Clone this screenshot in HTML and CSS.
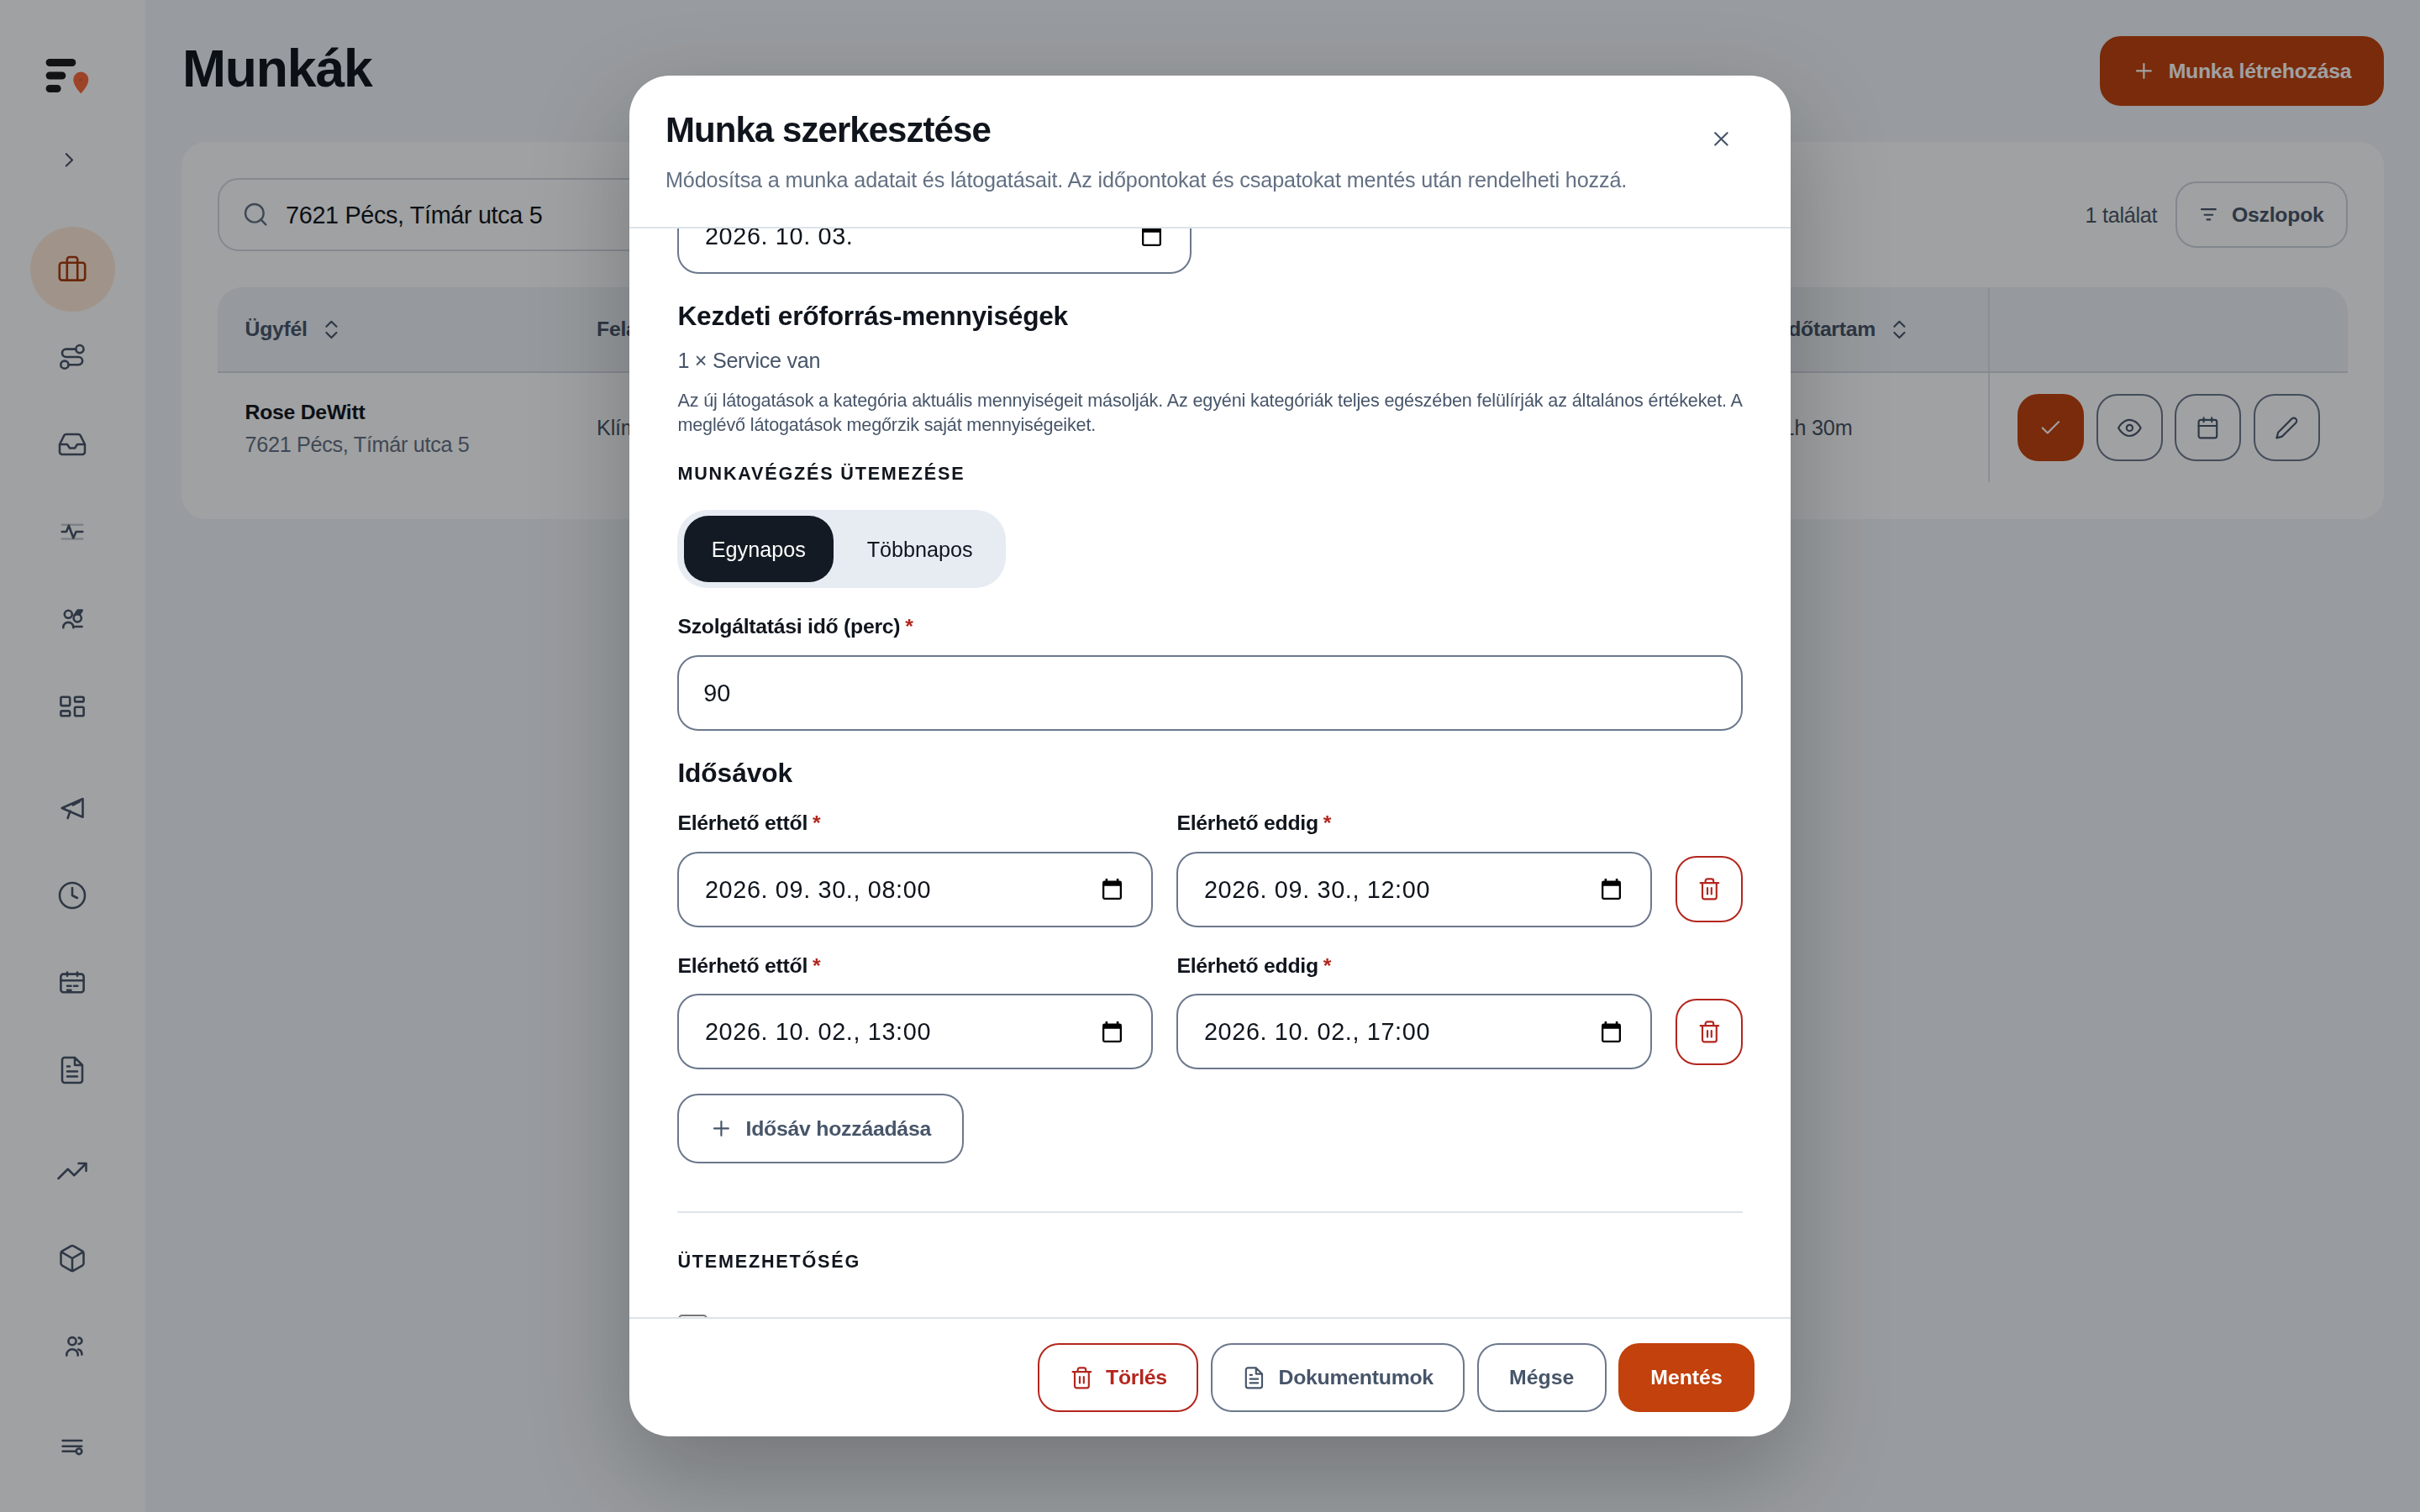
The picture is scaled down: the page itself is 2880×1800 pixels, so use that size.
FILE: index.html
```html
<!DOCTYPE html>
<html lang="hu">
<head>
<meta charset="utf-8">
<title>Munkák</title>
<link rel="stylesheet" href="styles.css">
</head>
<body>
<svg class="defs" aria-hidden="true">
  <symbol id="i-plus" viewBox="0 0 24 24"><path d="M12 5v14M5 12h14"/></symbol>
  <symbol id="i-trash" viewBox="0 0 24 24"><path d="M3 6h18M19 6v14a2 2 0 0 1-2 2H7a2 2 0 0 1-2-2V6M8 6V4a2 2 0 0 1 2-2h4a2 2 0 0 1 2 2v2M10 11v6M14 11v6"/></symbol>
  <symbol id="i-file" viewBox="0 0 24 24"><path d="M14 2H6a2 2 0 0 0-2 2v16a2 2 0 0 0 2 2h12a2 2 0 0 0 2-2V8zM14 2v6h6M16 13H8M16 17H8M10 9H8"/></symbol>
  <symbol id="i-sort" viewBox="0 0 24 24"><path d="M7 15l5 5 5-5M7 9l5-5 5 5"/></symbol>
  <symbol id="i-picker" viewBox="0 0 23 25"><path fill="#000" stroke="none" fill-rule="evenodd" d="M3.6 0h2.6v2.6h10.6V0h2.6v2.6h1.2A2.4 2.4 0 0 1 23 5v17.6a2.4 2.4 0 0 1-2.4 2.4H2.4A2.4 2.4 0 0 1 0 22.600V5a2.400 2.400 0 0 1 2.400-2.400h1.200zM2.300 8.800v13.900h18.400V8.800z"/></symbol>
</svg>

<div class="app">
  <aside class="sidebar">
    <svg class="logo" viewBox="0 0 72 42"><rect x="4.600" y="0" width="35.700" height="9" rx="4.500" fill="#1a1a1a"/><rect x="4.600" y="15.500" width="23.700" height="9" rx="4.500" fill="#1a1a1a"/><rect x="4.600" y="31" width="18" height="9" rx="4.500" fill="#1a1a1a"/><path fill="#f9683a" d="M46.300 41.500c-3.500-4.200-9-10.500-9-17a9 9 0 0 1 18 0c0 6.500-5.500 12.800-9 17z"/><circle cx="46.300" cy="25" r="2.200" fill="#e85f35"/></svg>
    <svg class="icon expand" viewBox="0 0 24 24"><path d="M9 18l6-6-6-6"/></svg>
    <nav class="nav">
      <div class="nav-group">
        <a class="nav-item active"><svg class="glyph" viewBox="-20 -20 40 40"><rect x="-15.200" y="-7.200" width="30.400" height="20.800" rx="3"/><path d="M-6.200 13.600V-11a3 3 0 0 1 3-3H3.200a3 3 0 0 1 3 3V13.600"/></svg></a>
        <a class="nav-item"><svg class="glyph" viewBox="-20 -20 40 40"><circle cx="8.900" cy="-9.400" r="4.600"/><circle cx="-9.100" cy="9.200" r="4.600"/><path d="M4.300-9.400H-7.300a4.700 4.700 0 0 0 0 9.400H7.500a4.600 4.600 0 0 1 0 9.200H-4.500"/></svg></a>
        <a class="nav-item"><svg class="icon nav-icon" viewBox="0 0 24 24"><path d="M22 12h-6l-2 3h-4l-2-3H2M5.450 5.110L2 12v6a2 2 0 0 0 2 2h16a2 2 0 0 0 2-2v-6l-3.450-6.890A2 2 0 0 0 16.760 4H7.240a2 2 0 0 0-1.790 1.110z"/></svg></a>
        <a class="nav-item"><svg class="glyph" viewBox="-20 -20 40 40"><path opacity=".3" d="M-12.300-8.300H12.300M-12.300 8.500H12.300"/><path d="M-12.300 0H-7L-4.100-7.300 1.300 7.500 4.500 0H12.300"/></svg></a>
        <a class="nav-item"><svg class="glyph" viewBox="-20 -20 40 40"><circle cx="-4.700" cy="-5.700" r="4.500"/><path d="M-10.700 10.300V9.500a6 5.600 0 0 1 12 0v.8M1.500 9H11.600"/><circle cx="6.200" cy="-1.200" r="4.600"/><path d="M2-3.800L6.600-10.400H11.700L8.600-5.500M8.800-10.200L5.800-5.800"/></svg></a>
        <a class="nav-item"><svg class="glyph" viewBox="-20 -20 40 40"><rect x="-13.600" y="-11.200" width="10.800" height="10.300" rx="1.500"/><rect x="3" y="-11.200" width="10.600" height="5.600" rx="1.500"/><rect x="3" y=".8" width="10.600" height="10.400" rx="1.500"/><rect x="-13.600" y="5.400" width="10.800" height="5.800" rx="1.500"/></svg></a>
      </div>
      <div class="nav-group">
        <a class="nav-item"><svg class="glyph" viewBox="-20 -20 40 40"><path d="M-12.300 0L12.500-11V10.700zM-2.400 3.500L-5.400 12M.8-3.700L9-8"/></svg></a>
        <a class="nav-item"><svg class="icon nav-icon" viewBox="0 0 24 24"><circle cx="12" cy="12" r="10"/><path d="M12 6v6l4 2"/></svg></a>
        <a class="nav-item"><svg class="glyph" viewBox="-20 -20 40 40"><rect x="-13.600" y="-10.400" width="27.200" height="21.600" rx="3"/><path d="M-13.600-2.700H13.600M-6-12.400V-8.200M6-12.400V-8.200M-6 3.700H-1.500M2 3.700H6.300M-6 8.700H-1.500"/></svg></a>
        <a class="nav-item"><svg class="icon nav-icon"><use href="#i-file"/></svg></a>
      </div>
      <div class="nav-group">
        <a class="nav-item"><svg class="icon nav-icon" viewBox="0 0 24 24"><path d="M23 6l-9.500 9.500-5-5L1 18M17 6h6v6"/></svg></a>
        <a class="nav-item"><svg class="icon nav-icon" viewBox="0 0 24 24"><path d="M21 16V8a2 2 0 0 0-1-1.730l-7-4a2 2 0 0 0-2 0l-7 4A2 2 0 0 0 3 8v8a2 2 0 0 0 1 1.730l7 4a2 2 0 0 0 2 0l7-4A2 2 0 0 0 21 16zM3.270 6.960L12 12.010l8.730-5.050M12 22.080V12"/></svg></a>
        <a class="nav-item"><svg class="glyph" viewBox="-20 -20 40 40"><circle cx="0" cy="-6.300" r="4.600"/><path d="M-6.700 10.600V9.700a6.700 6.400 0 0 1 13.400 0v.9M7.600-10.400a3.800 3.700 0 0 1 0 7.400M7 3.600c3 .6 4.400 2.600 4.400 6"/></svg></a>
      </div>
      <div class="nav-group">
        <a class="nav-item"><svg class="glyph" viewBox="-20 -20 40 40"><path d="M-11.400-8H11.200M-11.400-1.200H11.200M-11.400 4.800H4.600"/><circle cx="8" cy="4.800" r="3.300"/></svg></a>
      </div>
    </nav>
  </aside>

  <main class="main">
    <header class="page-head">
      <h1 class="page-title">Munkák</h1>
      <button class="btn primary"><svg class="icon"><use href="#i-plus"/></svg>Munka létrehozása</button>
    </header>
    <section class="card">
      <div class="toolbar">
        <div class="search"><svg class="icon search-icon" viewBox="0 0 24 24"><circle cx="11" cy="11" r="8"/><path d="M21 21l-4.350-4.350"/></svg><span>7621 Pécs, Tímár utca 5</span></div>
        <div class="tools">
          <span class="count">1 találat</span>
          <button class="btn columns"><svg class="icon" viewBox="0 0 24 24"><path d="M5 6.800h14M8 12.300h8M10.500 17h3"/></svg>Oszlopok</button>
        </div>
      </div>
      <div class="table">
        <div class="row head">
          <div class="cell">Ügyfél<svg class="icon"><use href="#i-sort"/></svg></div>
          <div class="cell">Feladat</div>
          <div class="cell time">Időtartam<svg class="icon"><use href="#i-sort"/></svg></div>
          <div class="cell actions"></div>
        </div>
        <div class="row body">
          <div class="cell"><div><div class="client">Rose DeWitt</div><div class="address">7621 Pécs, Tímár utca 5</div></div></div>
          <div class="cell">Klíma</div>
          <div class="cell time">1h 30m</div>
          <div class="cell actions">
            <button class="sq primary"><svg class="icon" viewBox="0 0 24 24"><path d="M20 6L9 17l-5-5"/></svg></button>
            <button class="sq"><svg class="icon" viewBox="0 0 24 24"><path d="M1 12s4-8 11-8 11 8 11 8-4 8-11 8-11-8-11-8z"/><circle cx="12" cy="12" r="3"/></svg></button>
            <button class="sq"><svg class="icon" viewBox="0 0 24 24"><rect x="3" y="4" width="18" height="18" rx="2"/><path d="M16 2v4M8 2v4M3 10h18"/></svg></button>
            <button class="sq"><svg class="icon" viewBox="0 0 24 24"><path d="M17 3a2.828 2.828 0 1 1 4 4L7.500 20.500 2 22l1.500-5.500z"/></svg></button>
          </div>
        </div>
      </div>
    </section>
  </main>
</div>

<div class="overlay">
  <div class="modal" role="dialog">
    <header class="modal-head">
      <div>
        <h2 class="modal-title">Munka szerkesztése</h2>
        <p class="modal-desc">Módosítsa a munka adatait és látogatásait. Az időpontokat és csapatokat mentés után rendelheti hozzá.</p>
      </div>
      <button class="close"><svg class="icon" viewBox="0 0 24 24"><path d="M18 6L6 18M6 6l12 12"/></svg></button>
    </header>
    <div class="modal-body">
      <div class="field date half">2026. 10. 03.<svg class="picker"><use href="#i-picker"/></svg></div>
      <h3 class="sub resources">Kezdeti erőforrás-mennyiségek</h3>
      <p class="amount">1 × Service van</p>
      <p class="note">Az új látogatások a kategória aktuális mennyiségeit másolják. Az egyéni kategóriák teljes egészében felülírják az általános értékeket. A<br>meglévő látogatások megőrzik saját mennyiségeiket.</p>
      <h4 class="caps schedule">MUNKAVÉGZÉS ÜTEMEZÉSE</h4>
      <div class="segment"><button class="seg on">Egynapos</button><button class="seg">Többnapos</button></div>
      <div class="label duration">Szolgáltatási idő (perc)<span class="req">*</span></div>
      <div class="field">90</div>
      <h3 class="sub slots">Idősávok</h3>
      <div class="slot-row">
        <div><div class="label">Elérhető ettől<span class="req">*</span></div><div class="field date">2026. 09. 30., 08:00<svg class="picker"><use href="#i-picker"/></svg></div></div>
        <div><div class="label">Elérhető eddig<span class="req">*</span></div><div class="field date">2026. 09. 30., 12:00<svg class="picker"><use href="#i-picker"/></svg></div></div>
        <button class="sq danger"><svg class="icon"><use href="#i-trash"/></svg></button>
      </div>
      <div class="slot-row">
        <div><div class="label">Elérhető ettől<span class="req">*</span></div><div class="field date">2026. 10. 02., 13:00<svg class="picker"><use href="#i-picker"/></svg></div></div>
        <div><div class="label">Elérhető eddig<span class="req">*</span></div><div class="field date">2026. 10. 02., 17:00<svg class="picker"><use href="#i-picker"/></svg></div></div>
        <button class="sq danger"><svg class="icon"><use href="#i-trash"/></svg></button>
      </div>
      <button class="btn add"><svg class="icon"><use href="#i-plus"/></svg>Idősáv hozzáadása</button>
      <hr class="rule">
      <h4 class="caps">ÜTEMEZHETŐSÉG</h4>
      <div class="checkbox"></div>
    </div>
    <footer class="modal-foot">
      <button class="btn danger">
        <svg class="icon"><use href="#i-trash"/></svg>Törlés</button>
      <button class="btn docs"><svg class="icon"><use href="#i-file"/></svg>Dokumentumok</button>
      <button class="btn wide">Mégse</button>
      <button class="btn primary wide">Mentés</button>
    </footer>
  </div>
</div>
</body>
</html>
```
FILE: styles.css
```css
:root {
  font-size: 28.8px;
  --ink: #10151d;
  --muted: #475569;
  --soft: #637083;
  --edge: #6b788c;
  --line: #dde3ea;
  --accent: #c2410c;
  --danger: #b3261e;
}

* { box-sizing: border-box; }

body {
  margin: 0;
  height: 1800px;
  overflow: hidden;
  background: #f3f6fa;
  color: var(--ink);
  font-family: "Liberation Sans", Arial, sans-serif;
  font-size: 25.2px;
  line-height: 36px;
}

h1, h2, h3, h4, p { margin: 0; }

button {
  font: inherit;
  color: inherit;
  background: none;
  border: 0;
  padding: 0;
}

.defs { position: absolute; width: 0; height: 0; }

.icon {
  width: 1rem;
  height: 1rem;
  flex: none;
  fill: none;
  stroke: currentColor;
  stroke-width: 1.8;
  stroke-linecap: round;
  stroke-linejoin: round;
}

.app { display: flex; height: 1800px; }

/* Sidebar */
.sidebar {
  width: 6rem;
  flex: none;
  display: flex;
  flex-direction: column;
  align-items: center;
  padding-top: 70px;
  background: #fff;
  color: #475569;
}

.logo { width: 72px; height: 42px; }

.expand { margin: 64.4px 7.2px 64.8px 0; stroke-width: 1.8; }

.nav { display: flex; flex-direction: column; gap: 19.4px; }
.nav-group { display: flex; flex-direction: column; gap: 3.4px; }

.nav-item {
  width: 3.5rem;
  height: 3.5rem;
  display: flex;
  align-items: center;
  justify-content: center;
  border-radius: 50%;
}

.nav-item.active { background: #ffead9; color: #a83a0c; }

.nav-icon { width: 36px; height: 36px; stroke-width: 1.7; }

.glyph {
  width: 40px;
  height: 40px;
  fill: none;
  stroke: currentColor;
  stroke-width: 2.6;
  stroke-linecap: round;
  stroke-linejoin: round;
}

/* Page */
.main { flex: 1; padding: 1.5rem; }

.page-head {
  display: flex;
  justify-content: space-between;
  height: 82.8px;
  margin-bottom: 1.5rem;
}

.page-title {
  font-size: 62.5px;
  line-height: 64px;
  letter-spacing: -.019em;
  padding: 6px 0 0 1px;
}

.btn {
  display: inline-flex;
  align-items: center;
  gap: .5rem;
  height: 82.8px;
  padding: 0 36.5px 0 36px;
  border: 2px solid var(--edge);
  border-radius: 25px;
  color: var(--muted);
  font-size: 24.8px;
  font-weight: 700;
  letter-spacing: -.01em;
  white-space: nowrap;
}

.btn.primary { background: var(--accent); border-color: var(--accent); color: #fff; }
.btn.danger { border-color: var(--danger); color: var(--danger); padding: 0 35.5px; }
.btn.docs { padding: 0 35.5px; }
.btn.wide { padding: 0 36.3px; letter-spacing: 0; }

.card {
  height: 448.5px;
  padding: 1.5rem;
  border-radius: 1rem;
  background: #fff;
}

.toolbar {
  display: flex;
  align-items: center;
  justify-content: space-between;
  margin-bottom: 1.5rem;
}

.search {
  display: flex;
  align-items: center;
  width: 760px;
  height: 3rem;
  padding-left: 27px;
  gap: 19.5px;
  border: 2px solid #d3dae3;
  border-radius: 25px;
  font-size: 28.8px;
  letter-spacing: -.012em;
}

.search-icon { width: 32.4px; height: 32.4px; color: var(--soft); stroke-width: 1.8; }

.tools { display: flex; align-items: center; gap: .75rem; }
.count { color: var(--muted); letter-spacing: -.012em; }
.btn.columns { height: 79px; padding: 0 26px 0 23.5px; gap: 13px; border-color: #cfd6df; }

.row {
  display: grid;
  grid-template-columns: 418.5px 1fr 286px 427.5px;
}

.row.head {
  height: 102px;
  border-bottom: 2px solid #d3dae3;
  border-radius: 1rem 1rem 0 0;
  background: #eff3f7;
  color: var(--muted);
  font-size: 24.8px;
  font-weight: 700;
  letter-spacing: -.012em;
}

.row.body { height: 130px; color: var(--muted); letter-spacing: -.008em; }

.cell {
  display: flex;
  align-items: center;
  gap: .5rem;
  padding: 0 32.4px;
}

.cell.time { padding-left: 41.5px; }

.cell.actions { border-left: 2px solid #dde3e9; padding: 0 0 0 33px; }

.client { color: var(--ink); font-size: 24.8px; font-weight: 700; line-height: 39px; letter-spacing: -.011em; padding-top: 1.5px; }
.address { line-height: 39px; color: var(--soft); letter-spacing: -.012em; }

.sq {
  display: flex;
  align-items: center;
  justify-content: center;
  width: 2.75rem;
  height: 2.75rem;
  border: 2px solid var(--edge);
  border-radius: 25px;
}

.sq.primary { background: var(--accent); border-color: var(--accent); color: #fff; }
.sq.danger { border-color: var(--danger); color: var(--danger); }

/* Dialog */
.overlay {
  position: fixed;
  inset: 0;
  display: flex;
  align-items: center;
  justify-content: center;
  background: rgba(6, 8, 11, .38);
}

.modal {
  display: flex;
  flex-direction: column;
  width: 48rem;
  height: 1620px;
  border-radius: 48px;
  background: #fff;
  overflow: hidden;
  box-shadow: 0 43px 115px rgba(0, 0, 0, .25);
}

.modal-head {
  display: flex;
  justify-content: space-between;
  flex: none;
  height: 182px;
  padding: 36px 1.5rem 0;
  border-bottom: 2px solid var(--line);
}

.modal-title {
  margin-top: 3.5px;
  font-size: 42px;
  line-height: 50px;
  letter-spacing: -.0225em;
}

.modal-desc { margin-top: 16.5px; color: var(--soft); letter-spacing: -.0054em; }

.close {
  display: flex;
  align-items: center;
  justify-content: center;
  width: 79.2px;
  height: 79.2px;
  color: var(--muted);
}

.modal-body {
  flex: 1;
  min-height: 0;
  overflow: hidden;
  padding: 0 2rem;
}

.field {
  display: flex;
  align-items: center;
  justify-content: space-between;
  height: 90px;
  padding: 0 34.5px 0 28.8px;
  border: 2px solid var(--edge);
  border-radius: 25px;
  font-size: 28.8px;
}

.field.date { padding-left: 30.5px; letter-spacing: .0225em; }
.field.half { width: 612px; margin-top: -36.5px; }

.picker { width: 23px; height: 25px; flex: none; }

.sub { font-size: 31.7px; line-height: 40px; letter-spacing: -.008em; }
.sub.resources { margin-top: 30px; }
.sub.slots { margin: 30.5px 0 22px; letter-spacing: -.003em; }

.amount { margin-top: 15.6px; color: var(--muted); letter-spacing: -.012em; }

.note {
  margin-top: 14.6px;
  color: var(--muted);
  font-size: 21.6px;
  line-height: 29.3px;
  letter-spacing: -.007em;
  white-space: nowrap;
}

.caps { font-size: 21.6px; line-height: 30px; letter-spacing: .083em; }
.caps.schedule { margin: 29px 0 27.5px; }

.segment {
  display: inline-flex;
  vertical-align: top;
  gap: .25rem;
  padding: .25rem;
  border-radius: 36px;
  background: #e7ecf3;
}

.seg { height: 2.75rem; padding: 0 32.5px; border-radius: 29px; }
.seg.on { background: #141a24; color: #fff; padding: 0 33.2px; }

.label { font-size: 24.8px; font-weight: 700; letter-spacing: -.011em; margin-bottom: 15.8px; }
.label.duration { margin-top: 27.4px; }
.req { margin-left: 6px; color: var(--danger); }

.slot-row {
  display: grid;
  grid-template-columns: 1fr 1fr 79.2px;
  gap: 1rem;
  align-items: end;
}

.slot-row + .slot-row { margin-top: 27.7px; }
.slot-row .sq { margin-bottom: 5.4px; }

.btn.add { margin-top: 28.8px; }

.rule {
  height: 2px;
  margin: 57px 0 43px;
  border: 0;
  background: #dfe3ea;
}

.checkbox {
  width: 35px;
  height: 35px;
  margin: 48px 0 0 1px;
  border: 2px solid #767676;
  border-radius: 5px;
}

.modal-foot {
  display: flex;
  flex: none;
  justify-content: flex-end;
  gap: .5rem;
  height: 142.3px;
  padding: 28.8px 1.5rem 0;
  border-top: 2px solid var(--line);
}
```
